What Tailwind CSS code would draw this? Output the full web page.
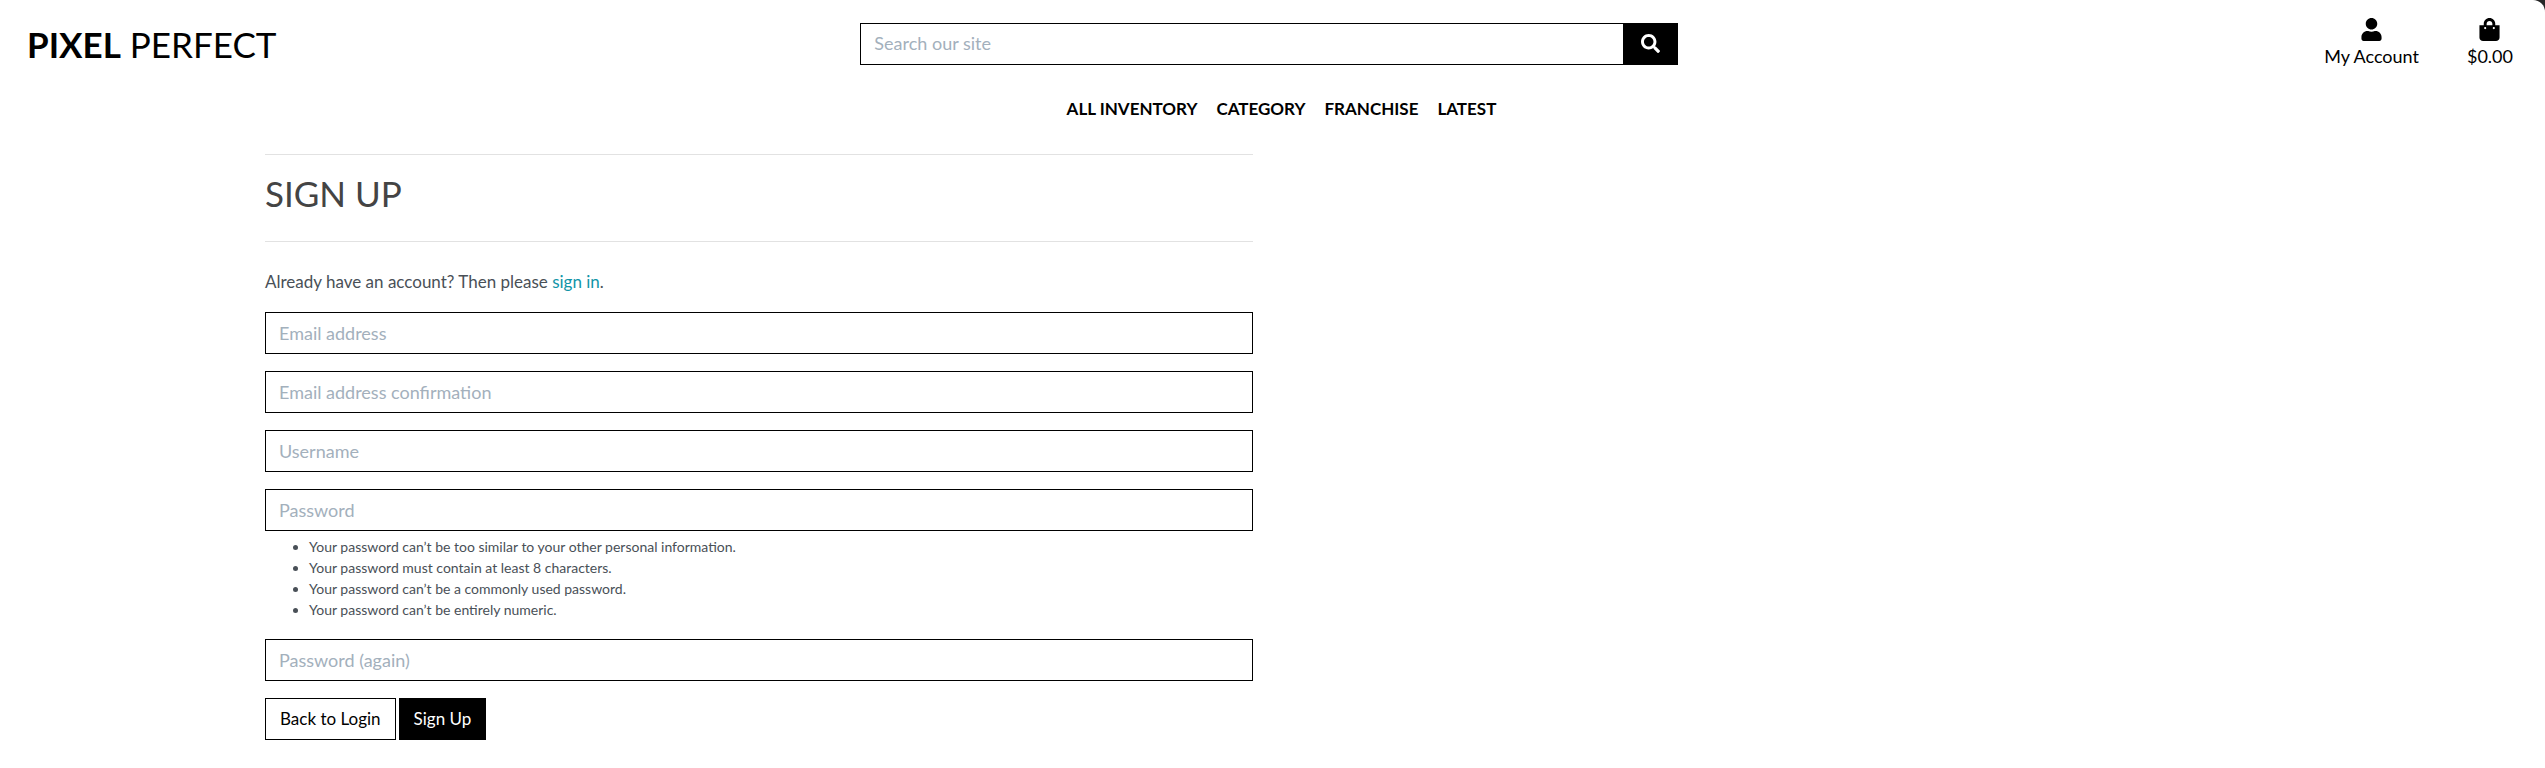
<!DOCTYPE html>
<html lang="en">
<head>
<meta charset="utf-8">
<meta name="viewport" content="width=device-width, initial-scale=1">
<title>Pixel Perfect - Sign Up</title>
<script src="https://cdn.jsdelivr.net/npm/@tailwindcss/browser@4"></script>
</head>
<body class="bg-neutral-800 font-['Lato',sans-serif] text-[18px] leading-[26px] text-[#495057]">
<div class="min-h-screen rounded-tr-xl bg-white">
<header class="text-black">
  <div class="grid grid-cols-3 items-start">
    <a href="#" class="pt-[23px] pl-[27px] text-[35px] leading-[42px]"><strong class="font-bold">PIXEL</strong> PERFECT</a>
    <form class="flex pt-[23px] pr-[19px] pl-3" role="search">
      <input type="search" aria-label="Search our site" placeholder="Search our site" class="h-[42px] min-w-0 flex-1 border border-r-0 border-black px-[13px] pb-0.5 placeholder:text-[#a3b0bc]">
      <button type="button" aria-label="Search" class="flex h-[42px] w-[55px] items-center justify-center bg-black text-white">
        <svg class="mb-0.5 size-[19px]" viewBox="0 0 512 512" fill="currentColor"><path d="M505 442.700L405.300 343c-4.500-4.500-10.600-7-17-7H372c27.600-35.300 44-79.700 44-128C416 93.100 322.900 0 208 0S0 93.100 0 208s93.100 208 208 208c48.300 0 92.700-16.400 128-44v16.300c0 6.400 2.500 12.500 7 17l99.700 99.700c9.400 9.400 24.600 9.400 33.900 0l28.300-28.300c9.400-9.400 9.400-24.600.1-34zM208 336c-70.700 0-128-57.200-128-128 0-70.700 57.200-128 128-128 70.700 0 128 57.200 128 128 0 70.700-57.200 128-128 128z"/></svg>
      </button>
    </form>
    <div class="flex justify-end gap-12 pt-[18px] pr-8">
      <a href="#" class="flex flex-col items-center">
        <svg class="h-[23px] w-[21px]" viewBox="0 0 448 512" fill="currentColor"><path d="M224 256c70.700 0 128-57.300 128-128S294.700 0 224 0 96 57.300 96 128s57.300 128 128 128zm89.600 32h-16.700c-22.200 10.200-46.900 16-72.900 16s-50.600-5.800-72.900-16h-16.700C60.200 288 0 348.200 0 422.400V464c0 26.500 21.500 48 48 48h352c26.500 0 48-21.500 48-48v-41.600c0-74.200-60.200-134.400-134.400-134.400z"/></svg>
        <span class="mt-0.5">My Account</span>
      </a>
      <a href="#" class="flex flex-col items-center">
        <svg class="h-[23px] w-[21px]" viewBox="0 0 448 512" fill="currentColor"><path d="M352 160v-32C352 57.420 294.579 0 224 0 153.420 0 96 57.420 96 128v32H0v272c0 44.183 35.817 80 80 80h288c44.183 0 80-35.817 80-80V160h-96zm-192-32c0-35.290 28.710-64 64-64s64 28.710 64 64v32H160v-32zm160 120c-13.255 0-24-10.745-24-24s10.745-24 24-24 24 10.745 24 24-10.745 24-24 24zm-192 0c-13.255 0-24-10.745-24-24s10.745-24 24-24 24 10.745 24 24-10.745 24-24 24z"/></svg>
        <span class="mt-0.5">$0.00</span>
      </a>
    </div>
  </div>
  <nav class="flex justify-center gap-[19px] pt-[27px] pb-8 pl-[18px] text-[17px] font-bold" aria-label="Main">
    <a href="#">ALL INVENTORY</a>
    <a href="#">CATEGORY</a>
    <a href="#">FRANCHISE</a>
    <a href="#">LATEST</a>
  </nav>
</header>
<main class="grid grid-cols-2 gap-x-10 pr-[264px] pl-[265px]">
  <div>
    <hr class="border-[#e2e2e2]">
    <h1 class="mt-[17px] mb-[27px] text-[35px] leading-[42px] text-[#444]">SIGN UP</h1>
    <hr class="border-[#e2e2e2]">
    <p class="mt-[27px] mb-[17px] text-[17px]">Already have an account? Then please <a href="#" class="text-[#1295a8]">sign in</a>.</p>
    <form>
      <div class="flex flex-col gap-[17px]">
        <input type="email" aria-label="Email address" placeholder="Email address" class="h-[42px] w-full border border-black px-[13px] placeholder:text-[#a3b0bc]">
        <input type="email" aria-label="Email address confirmation" placeholder="Email address confirmation" class="h-[42px] w-full border border-black px-[13px] placeholder:text-[#a3b0bc]">
        <input type="text" aria-label="Username" placeholder="Username" class="h-[42px] w-full border border-black px-[13px] placeholder:text-[#a3b0bc]">
        <div>
          <input type="password" aria-label="Password" aria-describedby="rules" placeholder="Password" class="block h-[42px] w-full border border-black px-[13px] placeholder:text-[#a3b0bc]">
          <ul id="rules" class="mt-[5px] mb-0.5 list-disc pl-11 text-[14px] leading-[21px]">
            <li>Your password can’t be too similar to your other personal information.</li>
            <li>Your password must contain at least 8 characters.</li>
            <li>Your password can’t be a commonly used password.</li>
            <li>Your password can’t be entirely numeric.</li>
          </ul>
        </div>
        <input type="password" aria-label="Password (again)" placeholder="Password (again)" class="h-[42px] w-full border border-black px-[13px] placeholder:text-[#a3b0bc]">
      </div>
      <div class="mt-[17px] flex gap-[3px] text-[17px]">
        <a href="#" class="flex h-[42px] items-center border border-black px-[14px] text-black">Back to Login</a>
        <button type="button" class="h-[42px] border border-black bg-black px-[14px] text-white">Sign Up</button>
      </div>
    </form>
  </div>
</main>
</div>
</body>
</html>
